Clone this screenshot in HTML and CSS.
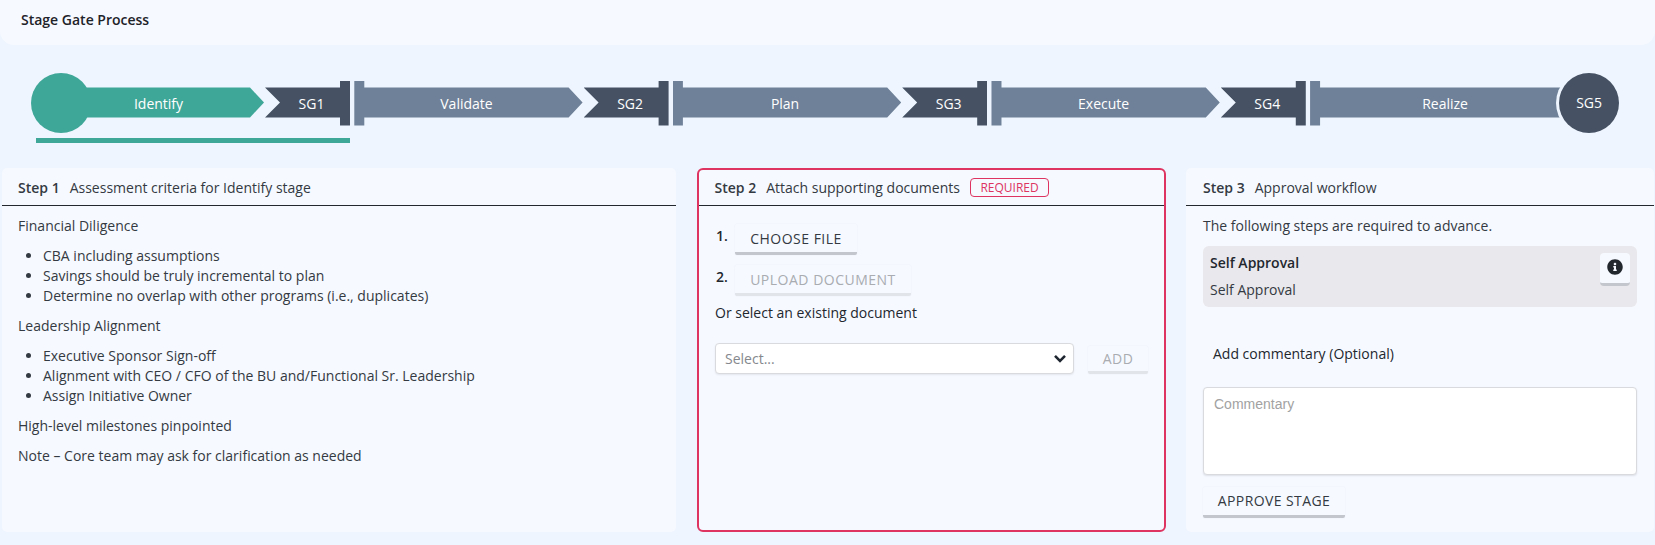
FILE: index.html
```html
<!DOCTYPE html>
<html lang="en">
    <head>
        <meta charset="utf-8">
        <title>Stage Gate Process</title>
        <link rel="stylesheet" href="styles.css">
    </head>
    <body>
        <header class="top-bar">Stage Gate Process</header>

        <section class="tracker">
            <div class="stepper">
                <div class="dot dot-active"></div>
                <div class="stage stage-first stage-active">Identify</div>
                <div class="gate">SG1</div>
                <div class="stage">Validate</div>
                <div class="gate">SG2</div>
                <div class="stage">Plan</div>
                <div class="gate">SG3</div>
                <div class="stage">Execute</div>
                <div class="gate">SG4</div>
                <div class="stage stage-last">Realize</div>
                <div class="dot dot-gate">SG5</div>
            </div>
            <div class="current-bar"></div>
        </section>

        <main class="panels">
            <section class="panel">
                <h3 class="panel-head"><b>Step 1</b>Assessment criteria for Identify stage</h3>
                <div class="panel-body criteria">
                    <p>Financial Diligence</p>
                    <ul>
                        <li>CBA including assumptions</li>
                        <li>Savings should be truly incremental to plan</li>
                        <li>Determine no overlap with other programs (i.e., duplicates)</li>
                    </ul>
                    <p>Leadership Alignment</p>
                    <ul>
                        <li>Executive Sponsor Sign-off</li>
                        <li>Alignment with CEO / CFO of the BU and/Functional Sr. Leadership</li>
                        <li>Assign Initiative Owner</li>
                    </ul>
                    <p>High-level milestones pinpointed</p>
                    <p>Note – Core team may ask for clarification as needed</p>
                </div>
            </section>

            <section class="panel panel-required">
                <h3 class="panel-head"><b>Step 2</b>Attach supporting documents<span class="badge">REQUIRED</span></h3>
                <div class="panel-body docs">
                    <div class="doc-row">
                        <span class="num">1.</span>
                        <button class="btn btn-choose">CHOOSE FILE</button>
                    </div>
                    <div class="doc-row">
                        <span class="num">2.</span>
                        <button class="btn btn-upload" disabled>UPLOAD DOCUMENT</button>
                    </div>
                    <p class="or-select">Or select an existing document</p>
                    <div class="select-row">
                        <div class="select">
                            <span>Select...</span>
                            <svg class="chevron" viewBox="0 0 14 9" width="14" height="9"><polyline points="2,1.8 7,6.8 12,1.8" fill="none" stroke="#1f2630" stroke-width="2.6"/></svg>
                        </div>
                        <button class="btn btn-add" disabled>ADD</button>
                    </div>
                </div>
            </section>

            <section class="panel panel-approval">
                <h3 class="panel-head"><b>Step 3</b>Approval workflow</h3>
                <div class="panel-body approval">
                    <p class="intro">The following steps are required to advance.</p>
                    <div class="approver">
                        <div class="approver-name">Self Approval</div>
                        <div class="approver-role">Self Approval</div>
                        <button class="info-btn">
                            <svg viewBox="0 0 512 512" width="16" height="16"><path fill="#22272e" d="M256 8C119.043 8 8 119.083 8 256c0 136.997 111.043 248 248 248s248-111.003 248-248C504 119.083 392.957 8 256 8zm0 110c23.196 0 42 18.804 42 42s-18.804 42-42 42-42-18.804-42-42 18.804-42 42-42zm56 254c0 6.627-5.373 12-12 12h-88c-6.627 0-12-5.373-12-12v-24c0-6.627 5.373-12 12-12h12v-64h-12c-6.627 0-12-5.373-12-12v-24c0-6.627 5.373-12 12-12h64c6.627 0 12 5.373 12 12v100h12c6.627 0 12 5.373 12 12v24z"/></svg>
                        </button>
                    </div>
                    <label class="comment-label">Add commentary (Optional)</label>
                    <textarea class="comment" placeholder="Commentary"></textarea>
                    <button class="btn btn-approve">APPROVE STAGE</button>
                </div>
            </section>
        </main>
    </body>
</html>
```

FILE: styles.css
```css
*{
    box-sizing: border-box;
}
html,body{
    margin: 0;
    height: 545px;
    overflow: hidden;
}
body{
    background: #eef5fe;
    color: #343a42;
    font-family: "Open Sans", "Liberation Sans", sans-serif;
    font-size: 14px;
    line-height: 20px;
}

.top-bar{
    height: 45px;
    padding: 10px 21px 0;
    background: #f6f9ff;
    border-radius: 0 0 14px 14px;
    color: #1e2329;
    font-weight: 600;
}

.tracker{
    height: 123px;
    padding: 28px 0 0 31px;
}
.stepper{
    display: flex;
    align-items: center;
    height: 60px;
    color: #fff;
}
.dot{
    flex: none;
    width: 60px;
    height: 60px;
    border-radius: 50%;
    text-align: center;
    line-height: 60px;
    position: relative;
    z-index: 1;
}
.dot-active{
    background: #3fa798;
    margin-right: -60px;
}
.dot-gate{
    background: #465264;
    box-shadow: 0 0 0 3px #eef5fe;
    margin-left: -11px;
}
.stage{
    flex: none;
    width: 228.3px;
    height: 45px;
    margin-right: 1px;
    padding-left: 10px;
    padding-right: 14px;
    background: #6f8198;
    text-align: center;
    line-height: 45px;
    clip-path: polygon(0 0, 10px 0, 10px 7px, calc(100% - 14px) 7px, 100% 22px, calc(100% - 14px) 37px, 10px 37px, 10px 45px, 0 45px);
}
.stage-active{
    background: #3fa798;
}
.stage-first{
    width: 233px;
    padding-left: 36px;
    clip-path: polygon(30px 7px, calc(100% - 14px) 7px, 100% 22px, calc(100% - 14px) 37px, 30px 37px);
}
.stage-last{
    width: 260px;
    margin-right: 0;
    padding-right: 0;
    clip-path: polygon(0 0, 10px 0, 10px 7px, 100% 7px, 100% 37px, 10px 37px, 10px 45px, 0 45px);
}
.gate{
    flex: none;
    width: 85px;
    height: 45px;
    margin-right: 4.3px;
    padding-left: 8px;
    background: #465264;
    text-align: center;
    line-height: 45px;
    clip-path: polygon(0 7px, calc(100% - 10px) 7px, calc(100% - 10px) 0, 100% 0, 100% 45px, calc(100% - 10px) 45px, calc(100% - 10px) 37px, 0 37px, 15px 22px);
}
.current-bar{
    width: 314px;
    height: 5px;
    margin: 5px 0 0 5px;
    background: #3fa798;
}

.panels{
    display: grid;
    grid-template-columns: 674px 470px 468px;
    column-gap: 20px;
    height: 364px;
    padding-left: 2px;
}
.panel{
    background: #f6f9ff;
    border-radius: 5px;
    min-width: 0;
}
.panel-required{
    margin-left: 1px;
    border: 2px solid #dd3461;
    border-radius: 6px;
}
.panel-head{
    display: flex;
    align-items: center;
    height: 38px;
    margin: 0;
    padding: 3px 0 0 16px;
    border-bottom: 1px solid #23282f;
    font-size: 14px;
    font-weight: 400;
}
.panel-head b{
    margin-right: 10px;
    font-weight: 600;
}
.panel-required .panel-head{
    height: 36px;
    padding-top: 0;
    padding-left: 15.5px;
}
.panel-approval .panel-head{
    padding-left: 17px;
}
.badge{
    display: inline-block;
    height: 19px;
    margin-left: 10px;
    padding: 0 9.5px;
    border: 1px solid #dd3461;
    border-radius: 4px;
    color: #dd3461;
    font-size: 12px;
    line-height: 17px;
}

.criteria{
    padding: 10px 16px;
}
.criteria p{
    margin: 0 0 10px;
}
.criteria ul{
    margin: 0 0 10px;
    padding-left: 25px;
}

.btn{
    display: block;
    height: 31px;
    padding: 1px 0 1px;
    background: #f6f9ff;
    border: 0;
    border-bottom: 3px solid #c3c6cc;
    border-radius: 2px;
    color: #343a42;
    font-family: inherit;
    font-size: 14px;
    letter-spacing: .5px;
    white-space: nowrap;
    box-shadow: 0 0 2px rgba(0,0,0,.06);
}
.btn[disabled]{
    border-bottom-color: #e1e4e9;
    color: #a9acb1;
}

.docs{
    padding: 18px 16px 0;
}
.doc-row{
    display: flex;
    height: 31px;
    margin-bottom: 10px;
}
.num{
    width: 20px;
    margin-top: 2px;
    padding-left: 1px;
    color: #22272e;
    font-weight: 600;
}
.btn-choose{
    width: 122px;
}
.btn-upload{
    width: 176px;
}
.or-select{
    margin: -3px 0 0;
    color: #22272e;
}
.select-row{
    display: flex;
    margin-top: 20px;
}
.select{
    display: flex;
    align-items: center;
    justify-content: space-between;
    width: 360px;
    height: 31px;
    padding: 0 6px 0 9px;
    background: #fff;
    border: 1px solid #d8dade;
    border-radius: 4px;
    color: #85888d;
    box-shadow: 0 1px 2px rgba(0,0,0,.08);
}
.btn-add{
    width: 60px;
    height: 28px;
    margin: 3px 0 0 14px;
    padding: 1px 0 1px;
}

.approval{
    padding: 10px 17px 0;
}
.intro{
    margin: 0 0 10px;
}
.approver{
    position: relative;
    height: 61px;
    padding: 7px 7px 0;
    background: #e9e8ec;
    border-radius: 6px;
}
.approver-name{
    color: #22272e;
    font-weight: 600;
}
.approver-role{
    margin-top: 7px;
}
.info-btn{
    position: absolute;
    top: 7px;
    right: 7px;
    display: flex;
    align-items: center;
    justify-content: center;
    width: 30px;
    height: 33px;
    padding: 0 0 3px;
    background: #f6f9ff;
    border: 0;
    border-bottom: 3px solid #c3c6cc;
    border-radius: 4px;
}
.comment-label{
    display: block;
    margin: 37px 0 23px 10px;
    color: #22272e;
}
.comment{
    display: block;
    width: 434px;
    height: 88px;
    padding: 8px 10px;
    background: #fff;
    border: 1px solid #d8dade;
    border-radius: 4px;
    font-family: "Liberation Sans", sans-serif;
    font-size: 14px;
    resize: none;
    box-shadow: 0 1px 2px rgba(0,0,0,.1);
}
.comment::placeholder{
    color: #a2a2a2;
}
.btn-approve{
    width: 142px;
    margin-top: 12px;
    padding: 1px 0 2px;
    letter-spacing: .4px;
}
```
